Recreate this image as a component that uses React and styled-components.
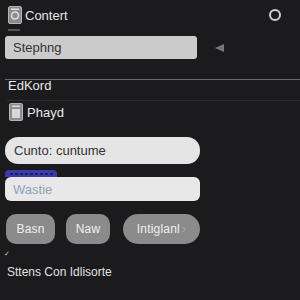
import styled, { createGlobalStyle } from 'styled-components';

const Global = createGlobalStyle`
    body {
        margin: 0;
        background: #1b1b1d;
        font-family: "Liberation Sans", Arial, sans-serif;
    }
`;

const Page = styled.div`
    width: 300px;
    height: 300px;
    box-sizing: border-box;
    background: #1b1b1d;
    display: flex;
    flex-direction: column;
    overflow: hidden;
`;

const Header = styled.div`
    display: flex;
    align-items: center;
    padding: 6px 19px 0 8px;
    height: 18px;
`;

const Title = styled.span`
    font-size: 13px;
    color: #e6e6e6;
    margin-left: 3px;
    flex: 1;
`;

const Ring = styled.div`
    width: 8px;
    height: 8px;
    border: 2px solid #cfcfcf;
    border-radius: 50%;
`;

const Rule = styled.div`
    margin: 5px 0 0 8px;
    width: 12px;
    height: 2px;
    background: #555;
`;

const FieldRow = styled.div`
    display: flex;
    align-items: center;
    padding: ${p => p.top ?? 5}px 0 0 5px;
`;

const Field = styled.div`
    box-sizing: border-box;
    width: ${p => p.w || 195}px;
    height: ${p => p.h}px;
    border-radius: ${p => p.r}px;
    background: ${p => p.bg || '#e5e5e5'};
    color: ${p => p.color || '#333'};
    font-size: 13px;
    display: flex;
    align-items: center;
    padding-left: ${p => p.pad || 8}px;
`;

const Arrow = styled.div`
    margin-left: 18px;
    width: 0;
    height: 0;
    border-top: 4px solid transparent;
    border-bottom: 4px solid transparent;
    border-right: 9px solid #777;
`;

const Section = styled.div`
    margin-top: ${p => p.top}px;
    margin-left: ${p => p.left}px;
    border-top: 1px solid ${p => p.line};
    display: flex;
    align-items: ${p => p.align || 'center'};
    padding-left: ${p => p.pad}px;
    height: ${p => p.h}px;
    line-height: ${p => p.lh || 'normal'};
    gap: 4px;
    font-size: 13px;
    color: #e8e8e8;
`;

const Tag = styled.div`
    margin: 6px 0 0 5px;
    width: 52px;
    height: 7px;
    border-radius: 4px 4px 0 0;
    background: #3b3ba8;
    display: flex;
    align-items: center;
    justify-content: center;
    gap: 2px;
`;

const Dot = styled.span`
    width: 3px;
    height: 2px;
    background: #1e1e60;
`;

const Buttons = styled.div`
    display: flex;
    margin: 13px 0 0 6px;
    gap: 11px;
`;

const Button = styled.div`
    height: 30px;
    width: ${p => p.w}px;
    border-radius: ${p => p.r}px;
    background: #8b8b8b;
    color: #f0f0f0;
    font-size: 12px;
    letter-spacing: 0.2px;
    display: flex;
    align-items: center;
    justify-content: center;
    gap: 2px;
    margin-left: ${p => p.ml || 0}px;
`;

const Check = styled.div`
    margin: 6px 0 0 4px;
    font-size: 7px;
    color: #ccc;
    line-height: 7px;
`;

const Footer = styled.div`
    margin: 8px 0 0 7px;
    font-size: 12px;
    color: #e0e0e0;
`;

const DocIcon = ({ round }) => (
    <svg width="14" height="18" viewBox="0 0 14 18">
        <rect x="0.5" y="0.5" width="13" height="17" rx="1.5" fill="#8c8c8c" stroke="#b5b5b5" />
        {round ? (
            <circle cx="7" cy="9.5" r="3.5" fill="none" stroke="#e0e0e0" strokeWidth="1.5" />
        ) : (
            <rect x="3" y="6" width="8" height="9" fill="#d8d8d8" />
        )}
        <rect x="3" y="2.5" width="8" height="1.5" fill="#e0e0e0" />
    </svg>
);

const App = () => (
    <Page>
        <Global />
        <Header>
            <DocIcon round />
            <Title>Contert</Title>
            <Ring />
        </Header>
        <Rule />
        <FieldRow>
            <Field w={192} h={23} r={3} bg="#cbcbcb">Stephng</Field>
            <Arrow />
        </FieldRow>
        <Section top={20} left={5} line="#6a6a6a" pad={3} h={12} align="flex-start" lh="11px">EdKord</Section>
        <Section top={8} left={7} line="#2c2c2e" pad={2} h={22}>
            <DocIcon />
            Phayd
        </Section>
        <FieldRow top={14}>
            <Field h={27} r={13} pad={9}>Cunto: cuntume</Field>
        </FieldRow>
        <Tag>
            {[0, 1, 2, 3, 4, 5, 6, 7, 8].map(i => <Dot key={i} />)}
        </Tag>
        <FieldRow top={0}>
            <Field h={24} r={6} color="#8ea3ba" bg="#e8e8e8">Wastie</Field>
        </FieldRow>
        <Buttons>
            <Button w={49} r={10}>Basn</Button>
            <Button w={44} r={10}>Naw</Button>
            <Button w={77} r={15} ml={2}>
                Intiglanl
                <span style={{ color: '#a99fd8' }}>›</span>
            </Button>
        </Buttons>
        <Check>✓</Check>
        <Footer>Sttens Con Idlisorte</Footer>
    </Page>
);

export default App;
